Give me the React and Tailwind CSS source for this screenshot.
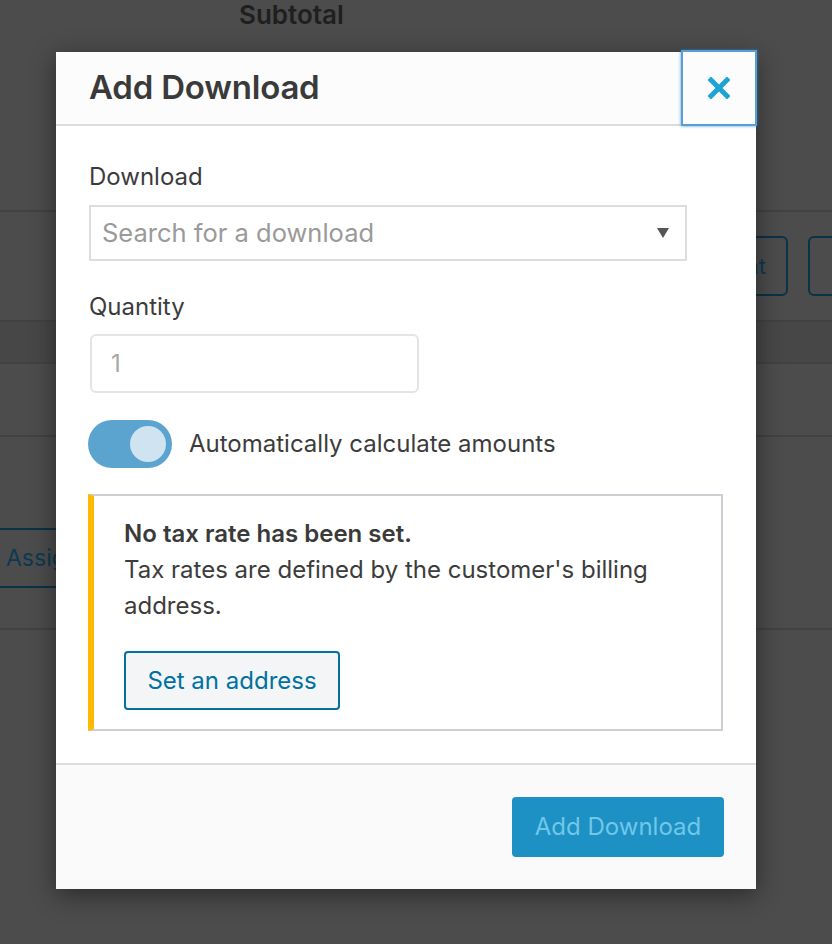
import React, { useState } from "react";

const font = { fontFamily: "Inter, 'Noto Sans', 'Liberation Sans', sans-serif" };

const CloseIcon = () => (
  <svg width="22" height="22" viewBox="0 0 22 22" fill="none">
    <path d="M3 3 L19 19 M19 3 L3 19" stroke="#1fa2d4" strokeWidth="5" strokeLinecap="square" />
  </svg>
);

const BackgroundPage = () => (
  <div className="absolute inset-0 overflow-hidden bg-[#4c4c4c]">
    <div className="h-[212px] border-b-2 border-[#424242] pt-[1px]">
      <div className="pl-[239px] text-[26px] leading-[28px] font-semibold text-[#1f1f1f]">
        Subtotal
      </div>
    </div>
    <div className="h-[110px] border-b-2 border-[#424242] flex justify-end items-start pt-[24px] gap-[20px] -mr-[116px]">
      <div className="h-[60px] px-[20px] flex items-center border-2 border-[#0c3246] rounded-[6px] text-[22px] text-[#0c3a51]">
        Add Adjustment
      </div>
      <div className="h-[60px] w-[140px] border-2 border-[#0c3246] rounded-[6px]"></div>
    </div>
    <div className="h-[42px] bg-[#474747] border-b-2 border-[#424242]"></div>
    <div className="h-[73px] border-b-2 border-[#424242]"></div>
    <div className="h-[193px] border-b-2 border-[#424242] pt-[91px]">
      <div className="-ml-[20px] w-[200px] h-[60px] pl-[24px] flex items-center border-2 border-[#0c3246] rounded-[6px] text-[23px] text-[#0c3a51]">
        Assign
      </div>
    </div>
  </div>
);

export default function App() {
  const [auto, setAuto] = useState(true);

  return (
    <div className="relative w-[832px] h-[944px] overflow-hidden" style={font}>
      <BackgroundPage />

      <div className="absolute left-[56px] top-[52px] w-[700px] bg-white shadow-[0_6px_24px_rgba(0,0,0,0.45)]">
        <div className="relative h-[74px] bg-[#fcfcfc] border-b-2 border-[#dddddd] flex items-center px-[33px]">
          <h1 className="text-[33px] font-semibold tracking-[-0.2px] text-[#3a3a3a]">Add Download</h1>
          <button className="absolute -right-[1px] -top-[2px] w-[76px] h-[76px] flex items-center justify-center bg-[#fcfcfc] border-2 border-[#5b9dd9] shadow-[0_0_3px_rgba(30,140,190,0.8)]">
            <CloseIcon />
          </button>
        </div>

        <div className="px-[33px] pt-[33px] pb-[32px]">
          <label className="block text-[24px] leading-[36px] text-[#3c3c3c]">Download</label>
          <div className="mt-[10px] h-[56px] w-[598px] border-2 border-[#dddddd] flex items-center justify-between pl-[11px] pr-[16px]">
            <span className="text-[25.5px] text-[#9a9a9a]">Search for a download</span>
            <svg width="12" height="10" viewBox="0 0 12 10">
              <path d="M0 0 H12 L6 10 Z" fill="#555" />
            </svg>
          </div>

          <label className="block mt-[28px] text-[24px] leading-[36px] text-[#3c3c3c]">Quantity</label>
          <div className="mt-[9px] ml-[1px] h-[59px] w-[329px] border-2 border-[#e4e4e4] rounded-[6px] flex items-center pl-[19px]">
            <span className="text-[24px] text-[#a8a8a8]">1</span>
          </div>

          <div className="mt-[27px] flex items-center gap-[17px]">
            <button
              onClick={() => setAuto(!auto)}
              className={
                auto
                  ? "w-[84px] h-[48px] rounded-full bg-[#5aa4cf] flex items-center justify-end pr-[6px] -ml-[1px]"
                  : "w-[84px] h-[48px] rounded-full bg-[#cccccc] flex items-center justify-start pl-[6px] -ml-[1px]"
              }
            >
              <span className="w-[36px] h-[36px] rounded-full bg-[#cfe3f0]"></span>
            </button>
            <span className="text-[24px] text-[#3c3c3c]">Automatically calculate amounts</span>
          </div>

          <div className="mt-[26px] -ml-[1px] w-[635px] border-2 border-l-[6px] border-[#ccd0d4] border-l-[#ffb900] pl-[30px] pr-[20px] pt-[20px] pb-[19px]">
            <p className="text-[24px] leading-[36px] font-semibold text-[#3a3a3a]">No tax rate has been set.</p>
            <p className="text-[24px] leading-[36px] text-[#3c3c3c]">
              Tax rates are defined by the customer's billing address.
            </p>
            <div className="mt-[27px]">
              <button className="h-[59px] w-[216px] rounded-[4px] border-2 border-[#0071a1] bg-[#f3f5f6] text-[24px] text-[#0071a1]">
                Set an address
              </button>
            </div>
          </div>
        </div>

        <div className="border-t-2 border-[#dddddd] bg-[#fafafa] h-[126px] flex items-center justify-end pr-[32px]">
          <button className="h-[60px] w-[212px] rounded-[4px] bg-[#1d91c3] text-[24px] text-[#72c6ea]">
            Add Download
          </button>
        </div>
      </div>
    </div>
  );
}
